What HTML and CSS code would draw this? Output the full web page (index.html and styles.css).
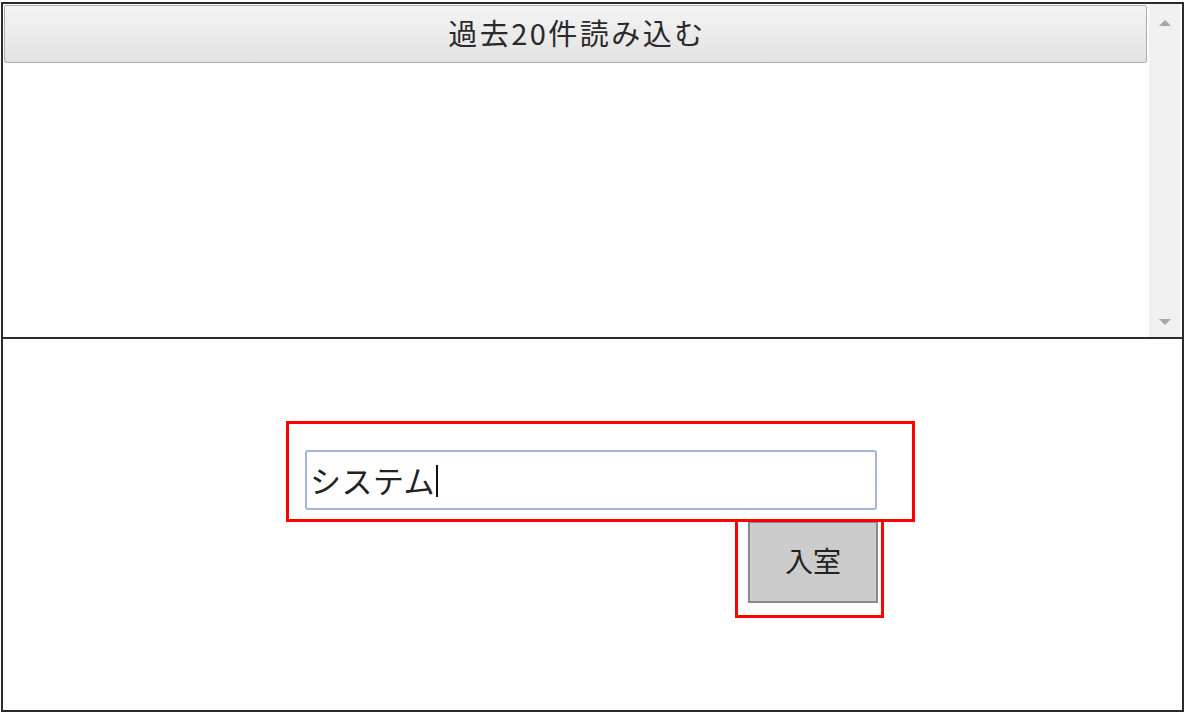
FILE: index.html
```html
<!DOCTYPE html>
<html lang="ja">
<head>
<meta charset="utf-8">
<link rel="stylesheet" href="styles.css">
</head>
<body>
<div class="frame">
  <div class="log">
    <div class="log-main">
      <button class="load-btn">過去20件読み込む</button>
    </div>
    <div class="scrollbar">
      <span class="arrow up"></span>
      <span class="arrow down"></span>
    </div>
  </div>
  <div class="entry">
    <div class="input-wrap">
      <div class="name-input">システム<span class="caret"></span></div>
      <span class="mark mark-input"></span>
    </div>
    <div class="btn-row">
      <div class="enter-wrap">
        <button class="enter-btn">入室</button>
        <span class="mark mark-btn"></span>
      </div>
    </div>
  </div>
</div>
</body>
</html>
```
FILE: styles.css
```css
html, body {
  margin: 0;
  padding: 0;
  background: #fff;
}
body {
  padding: 2px 0 0 1px;
  font-family: "Noto Sans CJK JP", "Noto Sans", sans-serif;
}
.frame {
  width: 1179px;
  height: 706px;
  border: 2px solid #2b2b2b;
  display: flex;
  flex-direction: column;
}
.log {
  height: 332px;
  border-bottom: 2px solid #2b2b2b;
  display: flex;
  padding: 1px 2px 0 1px;
}
.log-main {
  flex: 1;
}
.load-btn {
  display: block;
  width: 1143px;
  height: 58px;
  margin: 0;
  border: 1px solid #adadad;
  border-radius: 2px;
  background: linear-gradient(#f4f4f4, #e2e2e2);
  font-family: inherit;
  font-size: 29px;
  letter-spacing: 2.5px;
  color: #2a2a2a;
  padding: 0 0 4px 3px;
}
.scrollbar {
  width: 32px;
  margin-left: 2px;
  margin-top: -1px;
  background: #f0f0f0;
  position: relative;
}
.arrow {
  position: absolute;
  left: 10px;
  width: 0;
  height: 0;
  border-left: 6px solid transparent;
  border-right: 6px solid transparent;
}
.arrow.up {
  top: 16px;
  border-bottom: 6px solid #a6a6a6;
}
.arrow.down {
  bottom: 12px;
  border-top: 6px solid #a6a6a6;
}
.entry {
  flex: 1;
  padding-top: 111px;
  padding-left: 302px;
}
.input-wrap {
  position: relative;
  width: 572px;
}
.name-input {
  border: 2px solid #9fb5e0;
  border-radius: 3px;
  box-sizing: border-box;
  height: 60px;
  font-size: 31px;
  letter-spacing: 0.5px;
  line-height: 56px;
  padding-left: 3px;
  color: #222;
  display: flex;
  align-items: center;
}
.caret {
  display: inline-block;
  width: 2px;
  height: 32px;
  background: #111;
  margin-left: 1px;
  margin-top: 2px;
}
.mark {
  position: absolute;
  border: 3px solid #ff0000;
  pointer-events: none;
}
.mark-input {
  left: -19px;
  top: -29px;
  width: 623px;
  height: 95px;
}
.btn-row {
  display: flex;
  justify-content: flex-end;
  width: 573px;
  margin-top: 11px;
}
.enter-wrap {
  position: relative;
}
.enter-btn {
  display: block;
  width: 130px;
  height: 82px;
  margin: 0;
  border: 2px solid #8a8a8a;
  background: #cccccc;
  font-family: inherit;
  font-size: 28px;
  color: #222;
  padding: 0 0 4px;
}
.mark-btn {
  left: -13px;
  top: -2px;
  width: 143px;
  height: 93px;
}
```
